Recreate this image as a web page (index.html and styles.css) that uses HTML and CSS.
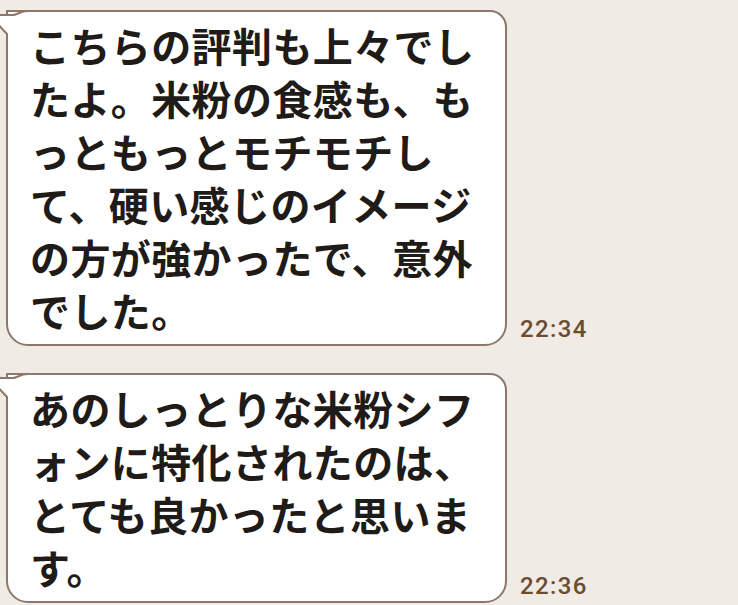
FILE: index.html
```html
<!DOCTYPE html>
<html lang="ja">
  <head>
    <meta charset="UTF-8" />
    <meta name="viewport" content="width=device-width, initial-scale=1.0" />
    <title>トーク</title>
    <link rel="stylesheet" href="styles.css">
  </head>
  <body>
    <main class="talk">
      <div class="msg">
        <div class="bubble">
          <svg class="bubble__tail" viewBox="0 0 40 30" width="40" height="30">
            <path d="M -4 5 H 14 C 18 5 21 1 29 1 H 40 V 30 H 8 V 24 L -4 11 Z" fill="#fff" />
            <path d="M -4 5 H 14 C 18 5 21 1 29 1 H 40" fill="none" stroke="#8e776b" stroke-width="2" />
            <path d="M -6 9 L 8 24 V 30" fill="none" stroke="#8e776b" stroke-width="2" />
          </svg>
          <p class="bubble__text">こちらの評判も上々でし<br>たよ。米粉の食感も、も<br>っともっとモチモチし<br>て、硬い感じのイメージ<br>の方が強かったで、意外<br>でした。</p>
        </div>
        <span class="msg__time">22:34</span>
      </div>
      <div class="msg">
        <div class="bubble">
          <svg class="bubble__tail" viewBox="0 0 40 30" width="40" height="30">
            <path d="M -4 5 H 14 C 18 5 21 1 29 1 H 40 V 30 H 8 V 24 L -4 11 Z" fill="#fff" />
            <path d="M -4 5 H 14 C 18 5 21 1 29 1 H 40" fill="none" stroke="#8e776b" stroke-width="2" />
            <path d="M -6 9 L 8 24 V 30" fill="none" stroke="#8e776b" stroke-width="2" />
          </svg>
          <p class="bubble__text">あのしっとりな米粉シフ<br>ォンに特化されたのは、<br>とても良かったと思いま<br>す。</p>
        </div>
        <span class="msg__time">22:36</span>
      </div>
    </main>
  </body>
</html>
```

FILE: styles.css
```css
* {
  box-sizing: border-box;
  margin: 0;
  padding: 0;
}
:root {
  --bg: #f0ebe5;
  --line: #8e776b;
  --ink: #1f1b18;
  --time: #6b4c30;
}
html,
body {
  height: 100%;
  overflow: hidden;
}
body {
  background: var(--bg);
  color: var(--ink);
  font-family: "Noto Sans CJK JP", "Noto Sans", sans-serif;
}
.talk {
  display: flex;
  flex-direction: column;
  gap: 27px;
  padding: 10px 0 0 6px;
}
.msg {
  display: flex;
  align-items: flex-end;
  gap: 13px;
}
.bubble {
  position: relative;
  width: 501px;
  background: #fff;
  border: 2px solid var(--line);
  border-radius: 0 17px 22px 22px;
  padding: 7px 10px 7px 22px;
}
.bubble__tail {
  position: absolute;
  left: -9px;
  top: -2px;
  display: block;
  overflow: visible;
}
.bubble__text {
  position: relative;
  font-size: 40px;
  font-weight: 700;
  line-height: 53px;
  white-space: nowrap;
  letter-spacing: 0.4px;
}
.msg__time {
  color: var(--time);
  font: 500 24px/1 Roboto, "Liberation Sans", sans-serif;
  letter-spacing: 1.4px;
  margin-bottom: 5px;
}
```
